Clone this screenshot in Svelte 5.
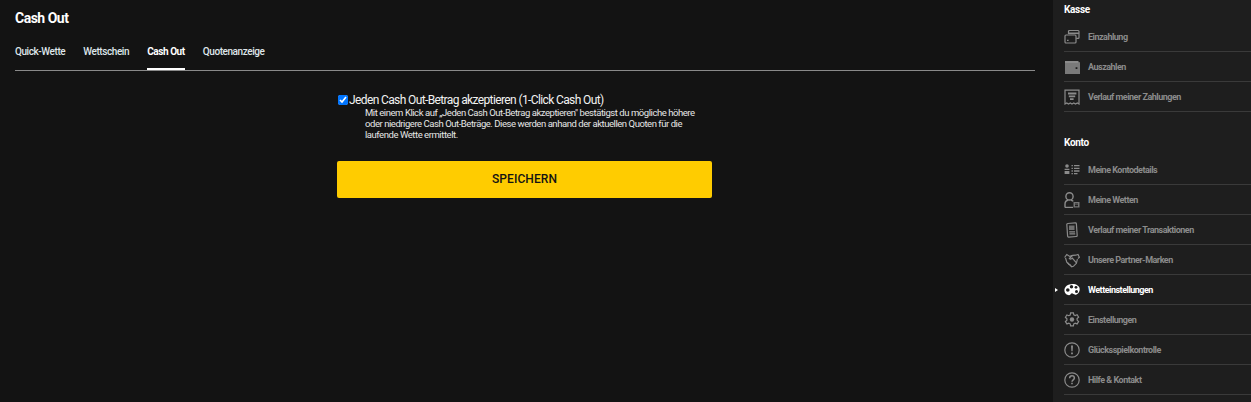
<script>
  const kasse = [
    { label: 'Einzahlung', icon: 'cards' },
    { label: 'Auszahlen', icon: 'wallet' },
    { label: 'Verlauf meiner Zahlungen', icon: 'receipt' }
  ];
  const konto = [
    { label: 'Meine Kontodetails', icon: 'details' },
    { label: 'Meine Wetten', icon: 'bets' },
    { label: 'Verlauf meiner Transaktionen', icon: 'doc' },
    { label: 'Unsere Partner-Marken', icon: 'hands' },
    { label: 'Wetteinstellungen', icon: 'palette', active: true },
    { label: 'Einstellungen', icon: 'gear' },
    { label: 'Glücksspielkontrolle', icon: 'warn' },
    { label: 'Hilfe & Kontakt', icon: 'help' }
  ];
  const tabs = ['Quick-Wette', 'Wettschein', 'Cash Out', 'Quotenanzeige'];
  let accept = true;
</script>

{#snippet icon(name)}
  <svg class="icon" viewBox="0 0 16 16" width="16" height="16" fill="none" stroke="currentColor" stroke-width="1.2">
    {#if name === 'cards'}
      <path d="M4.500 5V2.400q0-.9.9-.9h8.700q.9 0 .9.9v6q0 .9-.9.9H12.200" />
      <path d="M4.500 4.300h10.500" stroke-width="1.600" />
      <rect x="1" y="6" width="11" height="8" rx="1" />
      <path d="M3 11.400h1.600" />
    {:else if name === 'wallet'}
      <path d="M1 2h13.500v2H1z" fill="currentColor" stroke="none" />
      <path d="M1 3.200h15V15H1z" fill="currentColor" stroke="none" opacity=".85" />
      <rect x="11.600" y="8.200" width="1.800" height="1.800" fill="#1e1e1e" stroke="none" />
    {:else if name === 'receipt'}
      <path d="M1 15V1.200h14V15l-1.700-1-1.800 1-1.700-1-1.800 1-1.700-1-1.800 1-1.700-1z" />
      <path d="M4 3.600h8.400v2H4zM4.800 6.600h6.400v1.700H4.800zM6 9.200h3.600v1.800H6z" fill="currentColor" stroke="none" />
    {:else if name === 'details'}
      <circle cx="3" cy="4" r="1.800" fill="currentColor" stroke="none" />
      <path d="M.6 6.800h4.800v1.100H.6zM.6 9h4.800v3H.6z" fill="currentColor" stroke="none" />
      <path d="M7.500 3.600h1.400M10 3.600h5.500M7.500 6.300h1.400M10 6.300h5.500M7.500 9h1.400M10 9h5.500M7.500 11.600h1.400M10 11.600h3.500" stroke-width="1.300" />
    {:else if name === 'bets'}
      <circle cx="5.500" cy="4.400" r="3.600" stroke-width="1.400" />
      <path d="M1 15.500v-3.400q0-3.600 3.200-3.900M7 8.200q1.600.2 2.200 1.200M1 15.500h8" stroke-width="1.400" />
      <rect x="9.500" y="10" width="6" height="5.500" fill="currentColor" stroke="none" opacity=".8" />
      <path d="M11 12h3M11 13.600h3" stroke="#1e1e1e" />
    {:else if name === 'doc'}
      <rect x="3.200" y="1.200" width="9.600" height="13.600" rx="1" transform="rotate(-4 8 8)" />
      <path d="M5 3.500h5.500v4.500H5z" fill="currentColor" stroke="none" opacity=".75" />
      <path d="M5.200 9.800h5.800M5.400 11.800h5.800" />
    {:else if name === 'hands'}
      <path d="M.6 5.500l2.200-3 2.900 1.900 3-1 3-.2 2.300-.7 1.400 2.800-1.500 1.200M1.500 5.800l1.300 4.400 4.900 4.600 1.700-.5 3-3 1-4.200" />
      <path d="M8.300 3.500L5.400 6.500q1.400 1.300 2.900-.3l4.400 5M3.500 10.500l1.600 2.200M5.500 12l1.500 2" />
    {:else if name === 'palette'}
      <path d="M8.500 2C3.800 2 .4 4.900.4 8.300c0 3.100 2.500 4.900 4.600 4.900 1.600 0 1.400-1.600 2.600-1.800 1.700-.3 2.400 2.100 4.900 1 2.300-1 3.200-3.300 3.200-5.200C15.700 4 12.500 2 8.500 2z" fill="currentColor" stroke="none" />
      <circle cx="3.800" cy="8" r="1.800" fill="#1e1e1e" stroke="none" />
      <circle cx="7.500" cy="4.800" r="1.700" fill="#1e1e1e" stroke="none" />
      <circle cx="12" cy="5.300" r="1.400" fill="#1e1e1e" stroke="none" />
      <circle cx="12.500" cy="9.500" r="1.500" fill="#1e1e1e" stroke="none" />
    {:else if name === 'gear'}
      <path d="M6.600.8h2.800l.4 2 1.400.7 1.900-.8 1.500 2.400-1.500 1.400v1.600l1.500 1.400-1.500 2.400-1.900-.8-1.400.7-.4 2H6.600l-.4-2-1.400-.7-1.900.8L1.400 9.700l1.500-1.400V6.700L1.400 5.300l1.500-2.400 1.900.8 1.400-.7z" />
      <circle cx="8" cy="7.500" r="2.200" fill="currentColor" stroke="none" />
    {:else if name === 'warn'}
      <circle cx="8" cy="8" r="7.200" />
      <path d="M7 3.600h2l-.4 5.600H7.400zM7.100 10.400h1.800v1.800H7.100z" fill="currentColor" stroke="none" />
    {:else if name === 'help'}
      <circle cx="8" cy="8" r="7.200" />
      <path d="M5.600 6.200Q5.700 3.800 8 3.800t2.400 2.200c0 1.800-2.400 1.800-2.400 3.700" stroke-width="1.500" />
      <path d="M7.200 10.700h1.600v1.600H7.200z" fill="currentColor" stroke="none" />
    {/if}
  </svg>
{/snippet}

{#snippet menu(items)}
  <ul>
    {#each items as item}
      <li class:active={item.active}>
        {@render icon(item.icon)}
        <span>{item.label}</span>
      </li>
    {/each}
  </ul>
{/snippet}

<div class="page">
  <main>
    <h1>Cash Out</h1>
    <nav>
      {#each tabs as tab}
        <span class="tab" class:selected={tab === 'Cash Out'}>{tab}</span>
      {/each}
    </nav>
    <form>
      <label class="check">
        <input type="checkbox" bind:checked={accept} />
        <span>Jeden Cash Out-Betrag akzeptieren (1-Click Cash Out)</span>
      </label>
      <p>Mit einem Klick auf „Jeden Cash Out-Betrag akzeptieren" bestätigst du mögliche höhere oder niedrigere Cash Out-Beträge. Diese werden anhand der aktuellen Quoten für die laufende Wette ermittelt.</p>
      <button type="button">SPEICHERN</button>
    </form>
  </main>
  <aside>
    <h2 class="first">Kasse</h2>
    {@render menu(kasse)}
    <h2 class="second">Konto</h2>
    {@render menu(konto)}
  </aside>
</div>

<style>
  :global(body) {
    background: #131313;
    overflow: hidden;
  }

  .page {
    display: flex;
    height: 402px;
    font-family: Roboto, sans-serif;
    color: #fff;
    overflow: hidden;
  }

  main {
    width: 1053px;
    box-sizing: border-box;
    padding: 0 18px 0 15px;
    background: #131313;
  }

  h1 {
    margin: 10px 0 0;
    font-size: 14px;
    line-height: 17px;
    font-weight: 700;
    letter-spacing: -0.5px;
  }

  nav {
    display: flex;
    gap: 18px;
    margin-top: 17px;
    border-bottom: 1px solid #8a8a8a;
    height: 26px;
  }

  .tab {
    font-size: 10px;
    line-height: 16px;
    font-weight: 500;
    letter-spacing: -0.42px;
    color: #dfe6ea;
    height: 25px;
    box-sizing: border-box;
  }

  .tab.selected {
    color: #fff;
    font-weight: 700;
    border-bottom: 2px solid #fff;
    height: 26px;
  }

  form {
    width: 375px;
    margin: 22px 0 0 322px;
  }

  .check {
    display: flex;
    align-items: center;
    gap: 1px;
    font-size: 12px;
    line-height: 14px;
    letter-spacing: -0.62px;
    color: #f2f2f2;
  }

  input {
    width: 10px;
    height: 10px;
    margin: -1px 0 0 1px;
    accent-color: #0075ff;
  }

  p {
    margin: 0 0 0 28px;
    font-size: 9.5px;
    line-height: 11px;
    letter-spacing: -0.45px;
    color: #e6e6e6;
    width: 335px;
  }

  button {
    display: block;
    width: 100%;
    height: 37px;
    margin-top: 21px;
    padding: 0 0 2px;
    border: none;
    border-radius: 2px;
    background: #ffcc00;
    color: #131313;
    font-family: inherit;
    font-size: 12px;
    font-weight: 500;
    letter-spacing: 0.1px;
  }

  aside {
    flex: 1;
    box-sizing: border-box;
    padding-left: 11px;
    background: #1e1e1e;
  }

  h2 {
    margin: 0;
    font-size: 10px;
    line-height: 12px;
    font-weight: 700;
    letter-spacing: -0.3px;
  }

  h2.first {
    margin-top: 4px;
  }

  h2.second {
    margin-top: 25px;
  }

  ul {
    list-style: none;
    margin: 6px 0 0;
    padding: 0;
  }

  li {
    position: relative;
    display: flex;
    align-items: center;
    gap: 8px;
    height: 30px;
    padding-top: 1px;
    box-sizing: border-box;
    border-bottom: 1px solid #3a3a3a;
    font-size: 9px;
    font-weight: 700;
    letter-spacing: -0.5px;
    color: #8b8b8b;
  }

  li.active {
    color: #fff;
  }

  li.active::before {
    content: '';
    position: absolute;
    left: -9px;
    top: 13px;
    border-left: 3px solid #fff;
    border-top: 2.5px solid transparent;
    border-bottom: 2.5px solid transparent;
  }

  .icon {
    flex: none;
  }
</style>
